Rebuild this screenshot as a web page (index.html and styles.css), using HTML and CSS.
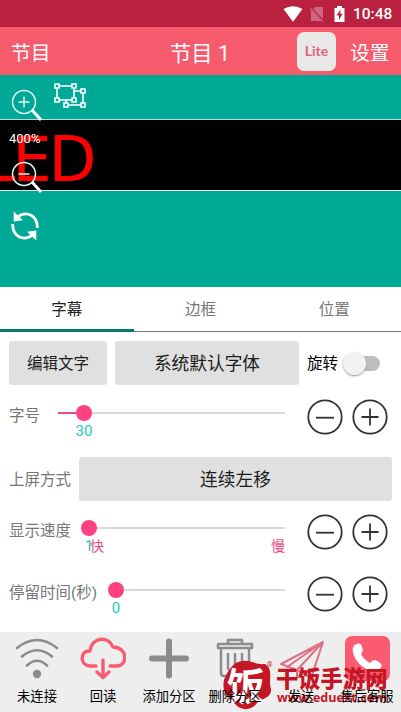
FILE: index.html
```html
<!DOCTYPE html>
<html lang="zh-CN">
<head>
<meta charset="utf-8">
<title>节目 1</title>
<link rel="stylesheet" href="styles.css">
</head>
<body>
<svg class="defs" width="0" height="0">
  <symbol id="minus" viewBox="0 0 36 36"><circle cx="18" cy="18" r="16.7"/><path d="M9 18.7H27"/></symbol>
  <symbol id="plus" viewBox="0 0 36 36"><circle cx="18" cy="18" r="16.7"/><path d="M9.5 18H26.5M18 9.5V26.5"/></symbol>
</svg>
<div class="status">
  <svg class="wifi" viewBox="0 0 20 16"><path d="M0.5 3Q10-2.6 19.5 3L10 15.7Z" fill="#fff"/></svg>
  <svg class="sim" viewBox="0 0 14 16"><path d="M5 1H13V15H1V5Z" fill="#d0667f"/><path d="M0 1L14 16" stroke="#ba2140" stroke-width="2.4"/><path d="M0 2L13 16" stroke="#d0667f" stroke-width="1.2"/></svg>
  <svg class="battery" viewBox="0 0 11 16"><path d="M3 0H8V2H10.5V16H.5V2H3Z" fill="#fff"/><path d="M6.5 3.5L2.5 9.5H5V14L8.7 7.8H6.3Z" fill="#ba2140"/></svg>
  <span>10:48</span>
</div>
<header class="bar">
  <span class="bar-left">节目</span>
  <h1>节目 1</h1>
  <span class="lite">Lite</span>
  <span class="bar-right">设置</span>
</header>
<section class="stage">
  <div class="screen"><span>LED</span></div>
  <div class="tools">
    <svg class="zoom" viewBox="0 0 32 32"><circle cx="13" cy="13" r="11.5"/><path d="M7.5 13H18.5M13 7.5V18.5"/><path class="handle" d="M21 21L30 31"/></svg>
    <span class="percent">400%</span>
    <svg class="zoom out" viewBox="0 0 32 32"><circle cx="13" cy="13" r="11.5"/><path d="M7.5 13H18.5"/><path class="handle" d="M21 21L30 31"/></svg>
    <svg class="refresh" viewBox="0 0 30 30"><path d="M7 6.5Q14 .6 21.5 4.5Q27.5 8 27.3 17M23 23.5Q16 29.4 8.5 25.5Q2.5 22 2.7 13" fill="none" stroke="#fff" stroke-width="2.8"/><path d="M3.7 .5V10.4L13 9.2ZM26.3 29.5V19.6L17 20.8Z" fill="#fff"/></svg>
  </div>
  <svg class="shapes" viewBox="0 0 32 26"><path d="M3 3H20V17H3ZM20 8H29V22H12V17" /><g fill="#00a996"><path d="M1 1H5V5H1ZM18 1H22V5H18ZM1 15H5V19H1ZM18 15H22V19H18ZM27 6H31V10H27ZM27 20H31V24H27ZM10 20H14V24H10Z"/></g></svg>
</section>
<nav class="tabs"><span class="active">字幕</span><span>边框</span><span>位置</span></nav>
<main>
  <div class="row row-buttons">
    <button class="edit">编辑文字</button><button class="font">系统默认字体</button>
    <span class="rotate">旋转</span><span class="switch"><i></i></span>
  </div>
  <div class="row row-size">
    <label>字号</label>
    <div class="slider"><i class="fill"></i><i class="thumb"></i><b>30</b></div>
    <svg class="step"><use href="#minus"/></svg><svg class="step"><use href="#plus"/></svg>
  </div>
  <div class="row row-mode"><label>上屏方式</label><button>连续左移</button></div>
  <div class="row row-speed">
    <label>显示速度</label>
    <div class="slider"><i class="thumb"></i><b>1</b><em class="fast">快</em><em class="slow">慢</em></div>
    <svg class="step"><use href="#minus"/></svg><svg class="step"><use href="#plus"/></svg>
  </div>
  <div class="row row-stay">
    <label>停留时间(秒)</label>
    <div class="slider"><i class="thumb"></i><b>0</b></div>
    <svg class="step"><use href="#minus"/></svg><svg class="step"><use href="#plus"/></svg>
  </div>
</main>
<footer>
  <div class="item"><svg viewBox="0 0 46 46" class="gray"><path d="M3 12Q23-4 43 12M8 20.500Q23 8 38 20.500M13 29.500Q23 20 33 29.500" stroke-width="2.6"/><circle cx="23" cy="38" r="4.2" fill="#8c8c8c" stroke="none"/></svg><span>未连接</span></div>
  <div class="item"><svg viewBox="0 0 46 46" class="pink"><path d="M16 30H10C-1 29 0 14 10 15C12 0 29 0 33 11C48 11 48 30 37 30H30M23 24V41M17 36L23 41.5L29 36" stroke-width="3.4"/></svg><span>回读</span></div>
  <div class="item"><svg viewBox="0 0 46 46" class="gray"><path d="M23 5.500V39.500M6 22.500H40" stroke-width="6"/></svg><span>添加分区</span></div>
  <div class="item"><svg viewBox="0 0 46 46" class="gray"><path d="M6 12V8H40V12ZM16 8V4H30V8M9 12V37Q9 40 12 40H34Q37 40 37 37V12M16 18V33M23 18V33M30 18V33" stroke-width="2.5"/></svg><span>删除分区</span></div>
  <div class="item"><svg viewBox="0 0 46 46" class="plane"><path d="M3 28L45 6L33 42L19 34ZM45 6L9 31M45 6L19 34V42L25 38" stroke-width="2"/></svg><span>发送</span></div>
  <div class="item"><svg viewBox="0 0 46 46" class="phone"><rect x="1" y="0" width="45" height="45" rx="7" fill="#fb5b70"/><path d="M14 7.500Q7 9 9 17Q14 32 29 35Q35 35 38 30Q37 26 31 24Q28 24 26 27Q20 24 17 18Q20 15 18 11Q17 7 14 7.500Z" fill="#fff"/></svg><span>售后客服</span></div>
  <div class="mark">
    <div class="seal"><svg viewBox="0 0 50 50"><path d="M1 20C5 10 11 1 20 1C27 0 33 5 42 4C51 9 45 20 48 29C49 38 39 38 34 43C28 51 18 51 12 44C8 39-2 35 1 20Z"/></svg><span>饭</span></div>
    <sup>®</sup>
    <div class="brand"><strong>干饭手游网</strong><small>www.eduext.com</small></div>
  </div>
</footer>
</body>
</html>
```
FILE: styles.css
```css
* { box-sizing: border-box; }
body { margin: 0; width: 401px; height: 712px; overflow: hidden; background: #fff; font-family: Roboto, "Noto Sans CJK SC", sans-serif; color: #222; display: flex; flex-direction: column; }
.defs { position: absolute; }
svg { display: block; flex: none; }
.status { height: 27px; background: #ba2140; color: #fff; display: flex; align-items: center; padding: 0 8px 0 283px; font-size: 15.5px; font-weight: 500; }
.wifi { width: 20px; height: 16px; }
.sim { width: 14px; height: 16px; margin-left: 7px; }
.battery { width: 11px; height: 16px; margin: 0 8px 0 10px; }
.bar { height: 48px; background: #f65b6d; color: #fff; display: flex; align-items: center; font-size: 19.8px; }
.bar-left { width: 159px; padding-left: 11px; }
.bar h1 { margin: 0; width: 138px; padding-left: 11px; font-size: 21.3px; font-weight: 400; }
.lite { width: 39px; height: 39px; border-radius: 7px; background: #e8e8e6; color: #e2637a; font: 700 14px/37px Lato, sans-serif; text-align: center; }
.bar-right { margin-left: 14px; }
.stage { height: 212px; background: #00a996; position: relative; padding-top: 44px; overflow: hidden; }
.screen { height: 72px; background: #000; border-top: 1px solid #b9dcd7; border-bottom: 1px solid #e2eeec; overflow: hidden; }
.screen span { display: block; margin-left: -19px; color: #f00; font: 62px/79px "DejaVu Sans", sans-serif; letter-spacing: -3px; }
.tools { position: absolute; left: 9px; top: 14px; width: 36px; color: #fff; }
.zoom { width: 32px; height: 32px; margin-left: 2px; fill: none; stroke: #dff4f1; stroke-width: 1.5; }
.zoom .handle { stroke: #fff; stroke-width: 3; }
.percent { display: block; height: 40px; line-height: 35px; font-size: 13px; }
.refresh { width: 30px; height: 30px; margin: 18px 0 0 1px; }
.shapes { position: absolute; left: 54px; top: 8px; width: 32px; height: 26px; fill: none; stroke: #fff; stroke-width: 1.6; }
.tabs { height: 45px; display: grid; grid-template-columns: repeat(3, 1fr); border-bottom: 1px solid #777; font-size: 15.5px; line-height: 46px; text-align: center; color: #777; }
.tabs .active { color: #222; height: 45px; border-bottom: 3px solid #08796b; }
main { height: 300px; padding: 9px 9px 0; }
.row { display: flex; align-items: center; }
button { border: 0; border-radius: 3px; height: 44px; padding: 0 0 2px; background: #e0e0e0; color: #1c1c1c; font-family: inherit; font-size: 17.7px; }
.row-buttons { height: 44px; }
.edit { width: 98px; font-size: 15.5px; }
.font { width: 184px; margin-left: 8px; }
.rotate { margin: -2px 0 0 8px; color: #000; font-size: 15.5px; }
.switch { width: 33px; height: 15px; border-radius: 8px; background: #bdbdbd; margin-left: 9px; }
.switch i { display: block; width: 23px; height: 23px; margin: -4px 0 0 -4px; border-radius: 50%; background: #f1f1f1; box-shadow: 0 1px 2px #999; }
label { color: #777; font-size: 15.5px; white-space: nowrap; }
.row-size { height: 64px; margin-bottom: 8px; }
.row-size label, .row-speed label, .row-stay label { transform: translateY(-3px); }
.row-mode { height: 44px; }
.row-mode label { width: 70px; margin-top: -2px; }
.row-mode button { width: 313px; }
.row-speed { height: 62px; }
.row-stay { height: 62px; }
.slider { position: relative; height: 2px; background: #d9d9d9; margin: -8px 22px 0 auto; width: 227px; }
.row-speed .slider { width: 196px; }
.row-stay .slider { width: 169px; }
.fill { position: absolute; left: 0; top: 0; height: 2px; width: 26px; background: #e94b80; }
.thumb { position: absolute; left: -8px; top: -7px; width: 16px; height: 16px; border-radius: 50%; background: #ff4081; }
.row-size .thumb { left: 18px; }
.slider b { position: absolute; left: -20px; top: 10px; width: 40px; text-align: center; font-weight: 400; font-size: 15px; line-height: 18px; color: #1cc9c1; }
.row-size .slider b { left: 6px; }
.slider em { position: absolute; top: 9px; font-style: normal; font-size: 14px; line-height: 20px; color: #e94a83; }
.fast { left: 1px; }
.slow { right: 0; }
.step { width: 36px; height: 36px; fill: none; stroke: #333; stroke-width: 1.8; }
.step + .step { margin: 0 4px 0 9px; }
footer { position: relative; height: 80px; background: #eee; display: grid; grid-template-columns: repeat(6, 66px); padding: 4px 0 0 4px; color: #000; }
.item { text-align: center; font-size: 13.3px; line-height: 20px; white-space: nowrap; }
.item svg { width: 46px; height: 46px; margin: 0 auto 5px; fill: none; stroke-linecap: round; stroke-linejoin: round; }
.item span { position: relative; z-index: 2; }
.gray { stroke: #8c8c8c; }
.pink { stroke: #f95c70; }
.plane { stroke: #df6f83; }
.mark { position: absolute; z-index: 1; left: 223px; top: 28px; display: flex; color: #c51626; }
.seal { position: relative; width: 50px; height: 50px; fill: #c51626; }
.seal span { position: absolute; left: 4px; top: 3px; color: #fff; font: 700 38px/42px "Noto Sans CJK SC", sans-serif; }
.mark sup { position: absolute; left: 44px; top: 1px; font-size: 7px; line-height: 8px; }
.brand strong, .brand small { display: block; white-space: nowrap; }
.brand strong { margin: 3px 0 0 3px; font: 900 22.3px/28px "Noto Sans CJK SC", sans-serif; }
.brand small { margin-left: 4px; font: 700 12.6px/14px "Open Sans", sans-serif; }
```
